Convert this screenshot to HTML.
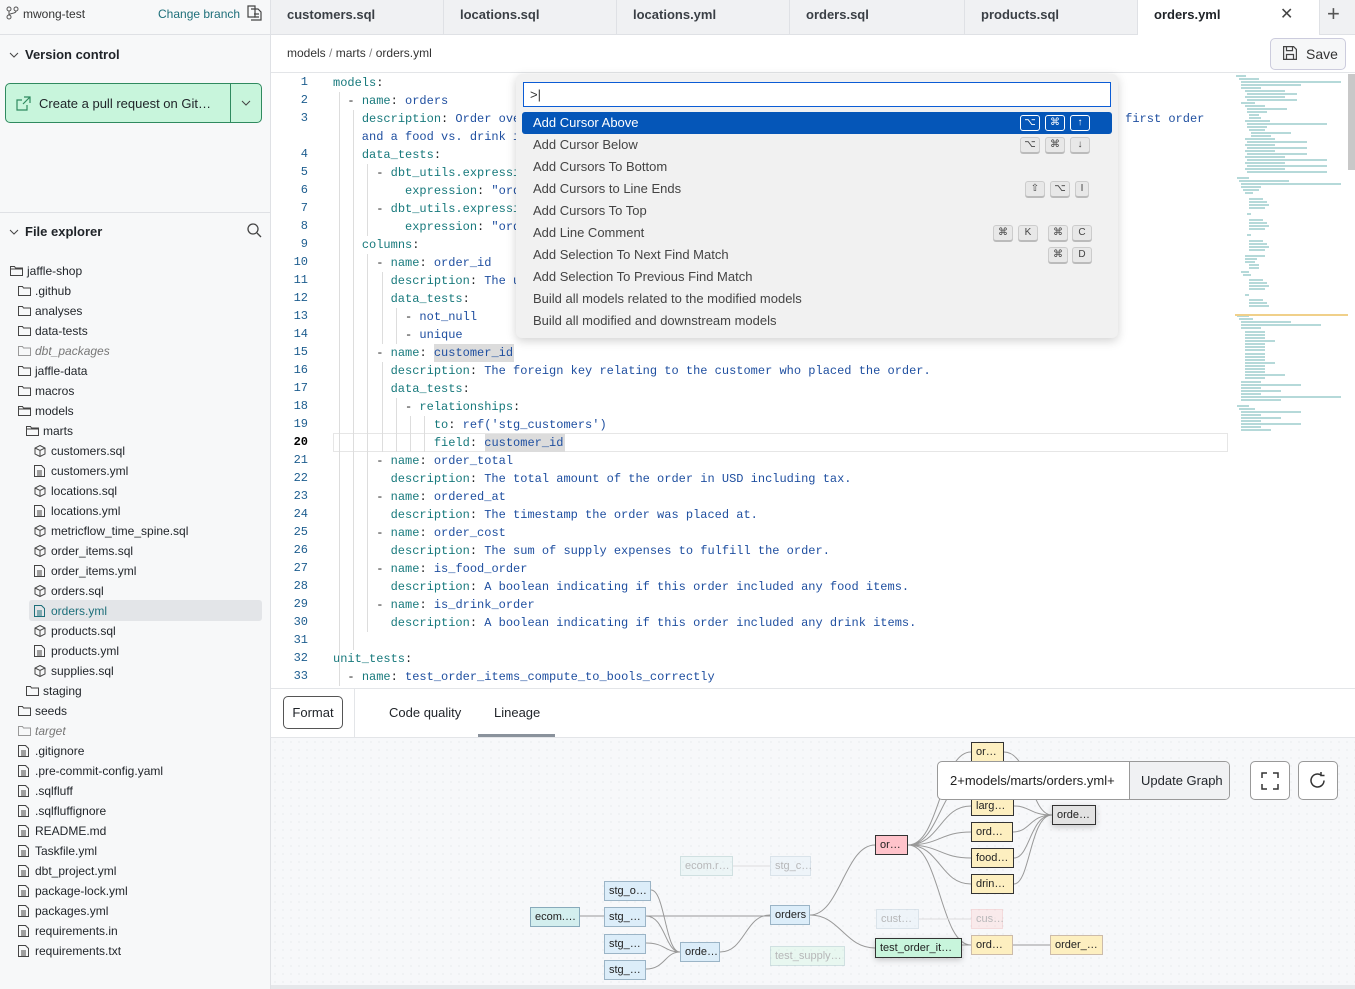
<!DOCTYPE html>
<html><head><meta charset="utf-8"><style>
*{box-sizing:border-box;margin:0;padding:0}
body{width:1355px;height:989px;overflow:hidden;font-family:"Liberation Sans",sans-serif;color:#1f2328;background:#fff;position:relative;font-size:13px}
.abs{position:absolute}
#side{left:0;top:0;width:271px;height:989px;background:#f7f8f9;border-right:1px solid #dfe1e5}
.tree div{position:absolute;height:20px;line-height:20px;font-size:12px;color:#1f2328;white-space:nowrap}
.tree svg{position:absolute;left:-17px;top:4px}
.tabs{left:271px;top:0;width:1084px;height:35px;background:#f0f1f3;border-bottom:1px solid #dfe1e5}
.tab{position:absolute;top:0;height:34px;border-right:1px solid #dfe1e5;font-weight:bold;font-size:13px;line-height:30px;padding-left:16px;color:#3a3f45}
.code{font-family:"Liberation Mono",monospace;font-size:12px}
.ln{position:absolute;left:272px;width:36px;text-align:right;color:#1d5d8f;font-family:"Liberation Mono",monospace;font-size:12px}
.cl{position:absolute;left:333px;white-space:pre;color:#1f4fa0;font-family:"Liberation Mono",monospace;font-size:12px;line-height:18px}
.k{color:#17797c}
.p{color:#222}
.pal{left:516px;top:74px;width:602px;height:264px;background:#f1f1f1;border-radius:6px;box-shadow:0 3px 10px rgba(0,0,0,.18)}
.it{position:absolute;left:6px;width:590px;height:22px;line-height:22px;padding-left:11px;font-size:13px;color:#444}
.kb{position:absolute;top:3px;height:16px;min-width:20px;border:1px solid #ccc;border-bottom-color:#bbb;border-radius:3px;background:#e8e8e8;font-size:10px;line-height:14px;text-align:center;color:#444;box-shadow:0 1px 0 #bbb}
.sel .kb{background:#0556b8;border-color:#fff;color:#fff;box-shadow:none}
.nd{position:absolute;height:20px;line-height:18px;font-size:11px;padding:0 4px;border:1px solid #7aa;white-space:nowrap;color:#222}
.bl{background:#dcedf9;border-color:#9bb4c6}
.yl{background:#fdefc0;border-color:#333}
.fd{opacity:.3}
</style></head><body>

<!-- sidebar -->
<div id="side" class="abs">
 <div class="abs" style="left:0;top:0;width:270px;height:35px;border-bottom:1px solid #dfe1e5"></div>
 <svg class="abs" style="left:6px;top:6px" width="13" height="14" viewBox="0 0 13 14" fill="none" stroke="#555" stroke-width="1"><circle cx="3" cy="3" r="2"/><circle cx="10" cy="3" r="2"/><circle cx="3" cy="11" r="2"/><path d="M3 5v4M10 5c0 3-7 2-7 4"/></svg>
 <div class="abs" style="left:23px;top:7px;font-size:12px;color:#333">mwong-test</div>
 <div class="abs" style="left:158px;top:7px;font-size:12px;color:#1e6f7a">Change branch</div>
 <svg class="abs" style="left:247px;top:5px" width="15" height="16" viewBox="0 0 15 16" fill="none" stroke="#444" stroke-width="1.2"><path d="M1 1h7v11H1zM4 4h7l3 3v8H4"/><path d="M7 9h5M7 12h5"/></svg>
 <svg class="abs" style="left:9px;top:51px" width="10" height="8" viewBox="0 0 10 8" fill="none" stroke="#444"><path d="M1 2l4 4 4-4"/></svg>
 <div class="abs" style="left:25px;top:47px;font-weight:bold;font-size:13px">Version control</div>
 <div class="abs" style="left:5px;top:83px;width:257px;height:40px;border:1px solid #2f8a5f;border-radius:5px;background:#c8f5dc"></div>
 <div class="abs" style="left:230px;top:84px;width:1px;height:38px;background:#2f8a5f"></div>
 <svg class="abs" style="left:16px;top:96px" width="15" height="15" viewBox="0 0 15 15" fill="none" stroke="#2f8a5f" stroke-width="1.2"><path d="M8 1h6v6M14 1L7 8M11 9v5H1V4h5"/></svg>
 <div class="abs" style="left:39px;top:96px;font-size:13px;color:#1f2328">Create a pull request on Git…</div>
 <svg class="abs" style="left:241px;top:100px" width="10" height="7" viewBox="0 0 10 7" fill="none" stroke="#444"><path d="M1 1l4 4 4-4"/></svg>
 <div class="abs" style="left:0;top:212px;width:270px;height:1px;background:#dfe1e5"></div>
 <svg class="abs" style="left:9px;top:228px" width="10" height="8" viewBox="0 0 10 8" fill="none" stroke="#444"><path d="M1 2l4 4 4-4"/></svg>
 <div class="abs" style="left:25px;top:224px;font-weight:bold;font-size:13px">File explorer</div>
 <svg class="abs" style="left:247px;top:223px" width="15" height="15" viewBox="0 0 15 15" fill="none" stroke="#444" stroke-width="1.3"><circle cx="6" cy="6" r="5"/><path d="M10 10l4 4"/></svg>
 <div class="abs" style="left:29px;top:600px;width:233px;height:21px;background:#e3e5e8;border-radius:3px"></div>
 <div class="tree">
 <!-- folders -->
 <div style="left:27px;top:261px"><svg width="13" height="11" viewBox="0 0 13 11" fill="none" stroke="#444"><path d="M.5 1.5h4l1 1.5h7v7.5H.5z M.5 4h12"/></svg>jaffle-shop</div>
 <div style="left:35px;top:281px"><svg width="13" height="11" viewBox="0 0 13 11" fill="none" stroke="#444"><path d="M.5 1.5h4l1 1.5h7v7.5H.5z"/></svg>.github</div>
 <div style="left:35px;top:301px"><svg width="13" height="11" viewBox="0 0 13 11" fill="none" stroke="#444"><path d="M.5 1.5h4l1 1.5h7v7.5H.5z"/></svg>analyses</div>
 <div style="left:35px;top:321px"><svg width="13" height="11" viewBox="0 0 13 11" fill="none" stroke="#444"><path d="M.5 1.5h4l1 1.5h7v7.5H.5z"/></svg>data-tests</div>
 <div style="left:35px;top:341px;color:#777;font-style:italic"><svg width="13" height="11" viewBox="0 0 13 11" fill="none" stroke="#999"><path d="M.5 1.5h4l1 1.5h7v7.5H.5z"/></svg>dbt_packages</div>
 <div style="left:35px;top:361px"><svg width="13" height="11" viewBox="0 0 13 11" fill="none" stroke="#444"><path d="M.5 1.5h4l1 1.5h7v7.5H.5z"/></svg>jaffle-data</div>
 <div style="left:35px;top:381px"><svg width="13" height="11" viewBox="0 0 13 11" fill="none" stroke="#444"><path d="M.5 1.5h4l1 1.5h7v7.5H.5z"/></svg>macros</div>
 <div style="left:35px;top:401px"><svg width="13" height="11" viewBox="0 0 13 11" fill="none" stroke="#444"><path d="M.5 1.5h4l1 1.5h7v7.5H.5z M.5 4h12"/></svg>models</div>
 <div style="left:43px;top:421px"><svg width="13" height="11" viewBox="0 0 13 11" fill="none" stroke="#444"><path d="M.5 1.5h4l1 1.5h7v7.5H.5z M.5 4h12"/></svg>marts</div>
 <div style="left:51px;top:441px"><svg width="12" height="12" viewBox="0 0 12 12" fill="none" stroke="#444"><path d="M6 .5l5 2.5v6L6 11.5 1 9V3zM1 3l5 2.5L11 3M6 5.5v6"/></svg>customers.sql</div>
 <div style="left:51px;top:461px"><svg width="11" height="12" viewBox="0 0 11 12" fill="none" stroke="#444"><path d="M.5.5h7l3 3v8H.5zM3 6h5M3 8h5M3 10h5"/></svg>customers.yml</div>
 <div style="left:51px;top:481px"><svg width="12" height="12" viewBox="0 0 12 12" fill="none" stroke="#444"><path d="M6 .5l5 2.5v6L6 11.5 1 9V3zM1 3l5 2.5L11 3M6 5.5v6"/></svg>locations.sql</div>
 <div style="left:51px;top:501px"><svg width="11" height="12" viewBox="0 0 11 12" fill="none" stroke="#444"><path d="M.5.5h7l3 3v8H.5zM3 6h5M3 8h5M3 10h5"/></svg>locations.yml</div>
 <div style="left:51px;top:521px"><svg width="12" height="12" viewBox="0 0 12 12" fill="none" stroke="#444"><path d="M6 .5l5 2.5v6L6 11.5 1 9V3zM1 3l5 2.5L11 3M6 5.5v6"/></svg>metricflow_time_spine.sql</div>
 <div style="left:51px;top:541px"><svg width="12" height="12" viewBox="0 0 12 12" fill="none" stroke="#444"><path d="M6 .5l5 2.5v6L6 11.5 1 9V3zM1 3l5 2.5L11 3M6 5.5v6"/></svg>order_items.sql</div>
 <div style="left:51px;top:561px"><svg width="11" height="12" viewBox="0 0 11 12" fill="none" stroke="#444"><path d="M.5.5h7l3 3v8H.5zM3 6h5M3 8h5M3 10h5"/></svg>order_items.yml</div>
 <div style="left:51px;top:581px"><svg width="12" height="12" viewBox="0 0 12 12" fill="none" stroke="#444"><path d="M6 .5l5 2.5v6L6 11.5 1 9V3zM1 3l5 2.5L11 3M6 5.5v6"/></svg>orders.sql</div>
 <div style="left:51px;top:601px;color:#1e6f7a"><svg width="11" height="12" viewBox="0 0 11 12" fill="none" stroke="#1e6f7a"><path d="M.5.5h7l3 3v8H.5zM3 6h5M3 8h5M3 10h5"/></svg>orders.yml</div>
 <div style="left:51px;top:621px"><svg width="12" height="12" viewBox="0 0 12 12" fill="none" stroke="#444"><path d="M6 .5l5 2.5v6L6 11.5 1 9V3zM1 3l5 2.5L11 3M6 5.5v6"/></svg>products.sql</div>
 <div style="left:51px;top:641px"><svg width="11" height="12" viewBox="0 0 11 12" fill="none" stroke="#444"><path d="M.5.5h7l3 3v8H.5zM3 6h5M3 8h5M3 10h5"/></svg>products.yml</div>
 <div style="left:51px;top:661px"><svg width="12" height="12" viewBox="0 0 12 12" fill="none" stroke="#444"><path d="M6 .5l5 2.5v6L6 11.5 1 9V3zM1 3l5 2.5L11 3M6 5.5v6"/></svg>supplies.sql</div>
 <div style="left:43px;top:681px"><svg width="13" height="11" viewBox="0 0 13 11" fill="none" stroke="#444"><path d="M.5 1.5h4l1 1.5h7v7.5H.5z"/></svg>staging</div>
 <div style="left:35px;top:701px"><svg width="13" height="11" viewBox="0 0 13 11" fill="none" stroke="#444"><path d="M.5 1.5h4l1 1.5h7v7.5H.5z"/></svg>seeds</div>
 <div style="left:35px;top:721px;color:#777;font-style:italic"><svg width="13" height="11" viewBox="0 0 13 11" fill="none" stroke="#999"><path d="M.5 1.5h4l1 1.5h7v7.5H.5z"/></svg>target</div>
 <div style="left:35px;top:741px"><svg width="11" height="12" viewBox="0 0 11 12" fill="none" stroke="#444"><path d="M.5.5h7l3 3v8H.5zM3 6h5M3 8h5M3 10h5"/></svg>.gitignore</div>
 <div style="left:35px;top:761px"><svg width="11" height="12" viewBox="0 0 11 12" fill="none" stroke="#444"><path d="M.5.5h7l3 3v8H.5zM3 6h5M3 8h5M3 10h5"/></svg>.pre-commit-config.yaml</div>
 <div style="left:35px;top:781px"><svg width="11" height="12" viewBox="0 0 11 12" fill="none" stroke="#444"><path d="M.5.5h7l3 3v8H.5zM3 6h5M3 8h5M3 10h5"/></svg>.sqlfluff</div>
 <div style="left:35px;top:801px"><svg width="11" height="12" viewBox="0 0 11 12" fill="none" stroke="#444"><path d="M.5.5h7l3 3v8H.5zM3 6h5M3 8h5M3 10h5"/></svg>.sqlfluffignore</div>
 <div style="left:35px;top:821px"><svg width="11" height="12" viewBox="0 0 11 12" fill="none" stroke="#444"><path d="M.5.5h7l3 3v8H.5zM3 6h5M3 8h5M3 10h5"/></svg>README.md</div>
 <div style="left:35px;top:841px"><svg width="11" height="12" viewBox="0 0 11 12" fill="none" stroke="#444"><path d="M.5.5h7l3 3v8H.5zM3 6h5M3 8h5M3 10h5"/></svg>Taskfile.yml</div>
 <div style="left:35px;top:861px"><svg width="11" height="12" viewBox="0 0 11 12" fill="none" stroke="#444"><path d="M.5.5h7l3 3v8H.5zM3 6h5M3 8h5M3 10h5"/></svg>dbt_project.yml</div>
 <div style="left:35px;top:881px"><svg width="11" height="12" viewBox="0 0 11 12" fill="none" stroke="#444"><path d="M.5.5h7l3 3v8H.5zM3 6h5M3 8h5M3 10h5"/></svg>package-lock.yml</div>
 <div style="left:35px;top:901px"><svg width="11" height="12" viewBox="0 0 11 12" fill="none" stroke="#444"><path d="M.5.5h7l3 3v8H.5zM3 6h5M3 8h5M3 10h5"/></svg>packages.yml</div>
 <div style="left:35px;top:921px"><svg width="11" height="12" viewBox="0 0 11 12" fill="none" stroke="#444"><path d="M.5.5h7l3 3v8H.5zM3 6h5M3 8h5M3 10h5"/></svg>requirements.in</div>
 <div style="left:35px;top:941px"><svg width="11" height="12" viewBox="0 0 11 12" fill="none" stroke="#444"><path d="M.5.5h7l3 3v8H.5zM3 6h5M3 8h5M3 10h5"/></svg>requirements.txt</div>
 </div>
</div>

<!-- tabs -->
<div class="tabs abs">
 <div class="tab" style="left:0;width:173px">customers.sql</div>
 <div class="tab" style="left:173px;width:173px">locations.sql</div>
 <div class="tab" style="left:346px;width:173px">locations.yml</div>
 <div class="tab" style="left:519px;width:175px">orders.sql</div>
 <div class="tab" style="left:694px;width:173px">products.sql</div>
 <div class="tab" style="left:867px;width:182px;background:#fff;height:35px;color:#1f2328">orders.yml<span style="position:absolute;left:142px;top:0;font-weight:normal;font-size:16px;color:#444">✕</span></div>
 <div class="abs" style="left:1056px;top:1px;font-size:22px;color:#555;line-height:26px">+</div>
</div>
<div class="abs" style="left:287px;top:46px;font-size:12px;color:#333">models <span style="color:#888">/</span> marts <span style="color:#888">/</span> orders.yml</div>
<div class="abs" style="left:1270px;top:38px;width:76px;height:32px;border:1px solid #ccd;border-radius:5px;background:#f6f7f8"></div>
<svg class="abs" style="left:1283px;top:46px" width="14" height="14" viewBox="0 0 14 14" fill="none" stroke="#444" stroke-width="1.2"><path d="M.6.6h10l2.8 2.8v10H.6zM3.5.6v4h6v-4M3.5 13.4V8.5h7v4.9"/></svg>
<div class="abs" style="left:1306px;top:46px;font-size:14px;color:#333">Save</div>
<div class="abs" style="left:271px;top:72px;width:1084px;height:1px;background:#e3e5e8"></div>

<!-- editor -->
<div class="abs" style="left:333px;top:433px;width:895px;height:19px;border:1px solid #e6e6e6"></div>
<div class="abs" style="left:434px;top:344px;width:80px;height:18px;background:#dcdcdc"></div>
<div class="abs" style="left:485px;top:434px;width:80px;height:18px;background:#dcdcdc"></div>
<div id="code"></div>
<!-- guides -->
<div class="abs" style="left:339px;top:92px;width:1px;height:594px;background:#ddd"></div>
<div class="abs" style="left:353px;top:110px;width:1px;height:540px;background:#ddd"></div>
<div class="abs" style="left:367px;top:164px;width:1px;height:72px;background:#ddd"></div>
<div class="abs" style="left:367px;top:254px;width:1px;height:378px;background:#ddd"></div>
<div class="abs" style="left:382px;top:272px;width:1px;height:72px;background:#ddd"></div>
<div class="abs" style="left:382px;top:362px;width:1px;height:90px;background:#ddd"></div>
<div class="abs" style="left:396px;top:308px;width:1px;height:36px;background:#ddd"></div>
<div class="abs" style="left:396px;top:398px;width:1px;height:54px;background:#ddd"></div>
<div class="abs" style="left:410px;top:416px;width:1px;height:36px;background:#ddd"></div>
<div class="abs" style="left:424px;top:416px;width:1px;height:36px;background:#ddd"></div>

<!-- minimap -->
<svg class="abs" style="left:1235px;top:74px" width="113" height="370">
 <g stroke="#3a9a9a" stroke-width="1" opacity=".75">
 <path d="M1 2h10M4 5h20M6 8h100M6 11h60M6 14h20M10 17h40M12 20h50M10 23h40M12 26h50M6 29h14M10 32h20M12 35h40M12 38h20M14 41h10M14 44h12M10 47h25M12 50h80M12 53h20M14 56h16M16 59h40M16 62h20M10 65h30M12 68h60M10 71h30M12 74h60M10 77h30M12 80h60M10 83h40M12 86h80M10 89h40M12 92h80M10 95h40M12 98h80"/>
 <path d="M2 104h12M4 107h50M6 110h100M6 113h20M8 116h16M10 119h8M14 125h14M14 128h18M14 131h20M14 134h16M12 140h4M14 146h14M14 149h18M14 152h20M14 155h16M12 161h4M14 167h14M14 170h18M14 173h20M14 176h16M10 182h20M10 185h12M10 188h10M14 191h10M14 194h10M6 198h8M8 201h8M14 206h14M14 209h18M14 212h20M14 215h16M10 221h4M14 226h14M14 229h18M14 232h20"/>
 <path d="M2 242h12M4 245h14M6 248h50M6 251h80M6 254h20M10 258h20M10 261h20M10 264h20M10 267h30M10 270h20M10 273h20M10 276h20M10 280h20M10 283h20M10 286h20M10 289h30M10 292h20M10 295h20M10 298h20M10 301h40M10 304h20M6 308h20M6 311h60M6 314h20M6 317h40M6 320h20M6 323h100M6 326h40M2 332h12M4 335h16M6 338h60M6 341h20M6 344h40M6 347h20M6 350h60M6 353h20M6 356h30"/>
 </g>
 <rect x="0" y="240" width="113" height="2" fill="#f0d08a"/>
</svg>
<div class="abs" style="left:1348px;top:74px;width:7px;height:96px;background:#c8c8c8"></div>

<!-- command palette -->
<div class="pal abs">
 <div class="abs" style="left:7px;top:8px;width:588px;height:25px;background:#fff;border:1px solid #0b5cd5"></div>
 <div class="abs" style="left:14px;top:13px;font-size:13px;color:#333">&gt;|</div>
 <div class="it sel" style="top:38px;background:#0556b8;color:#fff;border-radius:3px">Add Cursor Above
  <span class="kb" style="left:498px">⌥</span><span class="kb" style="left:523px">⌘</span><span class="kb" style="left:548px">↑</span></div>
 <div class="it" style="top:60px">Add Cursor Below
  <span class="kb" style="left:498px">⌥</span><span class="kb" style="left:523px">⌘</span><span class="kb" style="left:548px">↓</span></div>
 <div class="it" style="top:82px">Add Cursors To Bottom</div>
 <div class="it" style="top:104px">Add Cursors to Line Ends
  <span class="kb" style="left:503px">⇧</span><span class="kb" style="left:528px">⌥</span><span class="kb" style="left:553px;min-width:14px">I</span></div>
 <div class="it" style="top:126px">Add Cursors To Top</div>
 <div class="it" style="top:148px">Add Line Comment
  <span class="kb" style="left:471px">⌘</span><span class="kb" style="left:496px">K</span><span class="kb" style="left:526px">⌘</span><span class="kb" style="left:550px">C</span></div>
 <div class="it" style="top:170px">Add Selection To Next Find Match
  <span class="kb" style="left:526px">⌘</span><span class="kb" style="left:550px">D</span></div>
 <div class="it" style="top:192px">Add Selection To Previous Find Match</div>
 <div class="it" style="top:214px">Build all models related to the modified models</div>
 <div class="it" style="top:236px">Build all modified and downstream models</div>
</div>

<!-- bottom panel -->
<div class="abs" style="left:271px;top:688px;width:1084px;height:1px;background:#e3e5e8"></div>
<div class="abs" style="left:283px;top:696px;width:60px;height:33px;border:1px solid #555;border-radius:5px;font-size:13px;line-height:31px;text-align:center">Format</div>
<div class="abs" style="left:354px;top:689px;width:1px;height:48px;background:#e3e5e8"></div>
<div class="abs" style="left:389px;top:705px;font-size:13px">Code quality</div>
<div class="abs" style="left:494px;top:705px;font-size:13px">Lineage</div>
<div class="abs" style="left:478px;top:734px;width:77px;height:3px;background:#8a929c"></div>
<div class="abs" style="left:271px;top:737px;width:1084px;height:249px;background-color:#f7f8fa;background-image:radial-gradient(#dfe2e6 0.7px,transparent 0.8px);background-size:8px 8px;border-top:1px solid #e3e5e8"></div>
<div class="abs" style="left:271px;top:985px;width:1084px;height:4px;background:#e6e8eb"></div>

<svg class="abs" style="left:271px;top:737px" width="1084" height="248" fill="none" stroke="#999" stroke-width="1">
 <g transform="translate(-271,-737)">
 <path d="M580 916H604M646 916H770M651 890C665 890 665 952 680 952M646 916C665 916 665 952 680 952M646 943C665 943 665 952 680 952M646 969C665 969 665 952 680 952M720 952C745 952 745 915 770 915M810 915C840 915 845 845 875 845M810 915C840 915 845 948 875 948M962 945H971M1013 945H1050"/>
 <path d="M908 845C940 845 940 752 971 752M908 845C940 845 940 780 971 780M908 845C940 845 940 806 971 806M908 845C940 845 940 832 971 832M908 845C940 845 940 858 971 858M908 845C940 845 940 884 971 884M908 845C940 845 940 945 971 945M1004 752C1030 752 1030 815 1052 815M1014 806C1030 806 1030 815 1052 815M1013 832C1030 832 1030 815 1052 815M1014 858C1030 858 1030 815 1052 815M1014 884C1030 884 1030 815 1052 815"/>
 <path d="M733 866H770M919 919H971" stroke="#ddd"/>
 </g>
</svg>
<div class="nd fd" style="left:680px;top:856px;width:53px;background:#d5efef">ecom.r…</div>
<div class="nd fd bl" style="left:770px;top:856px;width:41px">stg_c…</div>
<div class="nd fd bl" style="left:876px;top:909px;width:43px">cust…</div>
<div class="nd fd" style="left:971px;top:909px;width:32px;background:#fcc;border-color:#e99">cus…</div>
<div class="nd fd" style="left:770px;top:946px;width:75px;background:#c8f5dc">test_supply…</div>
<div class="nd" style="left:530px;top:907px;width:50px;background:#d3eeee;border-color:#8ab">ecom.…</div>
<div class="nd bl" style="left:604px;top:881px;width:47px">stg_o…</div>
<div class="nd bl" style="left:604px;top:907px;width:42px">stg_…</div>
<div class="nd bl" style="left:604px;top:934px;width:42px">stg_…</div>
<div class="nd bl" style="left:604px;top:960px;width:42px">stg_…</div>
<div class="nd bl" style="left:680px;top:942px;width:40px">orde…</div>
<div class="nd bl" style="left:770px;top:905px;width:40px">orders</div>
<div class="nd" style="left:875px;top:835px;width:33px;background:#ffc3cb;border-color:#333">or…</div>
<div class="nd" style="left:875px;top:938px;width:87px;background:#c8f5dc;border-color:#333;box-shadow:0 2px 6px rgba(0,0,0,.2)">test_order_it…</div>
<div class="nd yl" style="left:971px;top:742px;width:33px">or…</div>
<div class="nd yl" style="left:971px;top:796px;width:43px">larg…</div>
<div class="nd yl" style="left:971px;top:822px;width:42px">ord…</div>
<div class="nd yl" style="left:971px;top:848px;width:43px">food…</div>
<div class="nd yl" style="left:971px;top:874px;width:43px">drin…</div>
<div class="nd yl" style="left:971px;top:935px;width:42px;border-color:#cba">ord…</div>
<div class="nd yl" style="left:1050px;top:935px;width:53px;border-color:#cba">order_…</div>
<div class="nd" style="left:1052px;top:805px;width:44px;background:#e2e2e2;border-color:#333;box-shadow:0 2px 6px rgba(0,0,0,.2)">orde…</div>

<div class="abs" style="left:937px;top:761px;width:293px;height:39px;background:#fff;border:1px solid #999;border-radius:5px;overflow:hidden">
 <div class="abs" style="left:12px;top:11px;font-size:13px;color:#222;white-space:nowrap">2+models/marts/orders.yml+</div>
 <div class="abs" style="left:191px;top:0;width:102px;height:39px;background:#f0f1f3;border-left:1px solid #999;font-size:13px;line-height:37px;padding-left:11px">Update Graph</div>
</div>
<div class="abs" style="left:1250px;top:761px;width:40px;height:39px;background:#fff;border:1px solid #999;border-radius:5px"></div>
<svg class="abs" style="left:1261px;top:772px" width="18" height="18" viewBox="0 0 18 18" fill="none" stroke="#333" stroke-width="1.5"><path d="M1 6V1h5M12 1h5v5M17 12v5h-5M6 17H1v-5"/></svg>
<div class="abs" style="left:1298px;top:761px;width:40px;height:39px;background:#fff;border:1px solid #999;border-radius:5px"></div>
<svg class="abs" style="left:1309px;top:772px" width="18" height="18" viewBox="0 0 18 18" fill="none" stroke="#333" stroke-width="1.5"><path d="M15 8.5A6.5 6.5 0 1 1 12 3M12 0v3.5h3.5"/></svg>

<script>
var L=[
[1,'<span class="k">models</span><span class="p">:</span>'],
[2,'  <span class="p">-</span> <span class="k">name</span><span class="p">:</span> orders'],
[3,'    <span class="k">description</span><span class="p">:</span> Order overview data mart, offering key details for each order including if it\'s a customer\'s first order'],
['','    and a food vs. drink item breakdown. One row per order.'],
[4,'    <span class="k">data_tests</span><span class="p">:</span>'],
[5,'      <span class="p">-</span> <span class="k">dbt_utils.expression_is_true</span><span class="p">:</span>'],
[6,'          <span class="k">expression</span><span class="p">:</span> "order_items_subtotal = subtotal"'],
[7,'      <span class="p">-</span> <span class="k">dbt_utils.expression_is_true</span><span class="p">:</span>'],
[8,'          <span class="k">expression</span><span class="p">:</span> "order_total = subtotal + tax_paid"'],
[9,'    <span class="k">columns</span><span class="p">:</span>'],
[10,'      <span class="p">-</span> <span class="k">name</span><span class="p">:</span> order_id'],
[11,'        <span class="k">description</span><span class="p">:</span> The unique key of the orders mart.'],
[12,'        <span class="k">data_tests</span><span class="p">:</span>'],
[13,'          <span class="p">-</span> not_null'],
[14,'          <span class="p">-</span> unique'],
[15,'      <span class="p">-</span> <span class="k">name</span><span class="p">:</span> customer_id'],
[16,'        <span class="k">description</span><span class="p">:</span> The foreign key relating to the customer who placed the order.'],
[17,'        <span class="k">data_tests</span><span class="p">:</span>'],
[18,'          <span class="p">-</span> <span class="k">relationships</span><span class="p">:</span>'],
[19,'              <span class="k">to</span><span class="p">:</span> ref(\'stg_customers\')'],
[20,'              <span class="k">field</span><span class="p">:</span> customer_id'],
[21,'      <span class="p">-</span> <span class="k">name</span><span class="p">:</span> order_total'],
[22,'        <span class="k">description</span><span class="p">:</span> The total amount of the order in USD including tax.'],
[23,'      <span class="p">-</span> <span class="k">name</span><span class="p">:</span> ordered_at'],
[24,'        <span class="k">description</span><span class="p">:</span> The timestamp the order was placed at.'],
[25,'      <span class="p">-</span> <span class="k">name</span><span class="p">:</span> order_cost'],
[26,'        <span class="k">description</span><span class="p">:</span> The sum of supply expenses to fulfill the order.'],
[27,'      <span class="p">-</span> <span class="k">name</span><span class="p">:</span> is_food_order'],
[28,'        <span class="k">description</span><span class="p">:</span> A boolean indicating if this order included any food items.'],
[29,'      <span class="p">-</span> <span class="k">name</span><span class="p">:</span> is_drink_order'],
[30,'        <span class="k">description</span><span class="p">:</span> A boolean indicating if this order included any drink items.'],
[31,''],
[32,'<span class="k">unit_tests</span><span class="p">:</span>'],
[33,'  <span class="p">-</span> <span class="k">name</span><span class="p">:</span> test_order_items_compute_to_bools_correctly']];
var h='';L.forEach(function(r,i){var y=74+i*18;h+='<div class="ln" style="top:'+(y+1)+'px;'+(r[0]==20?'color:#000;font-weight:bold':'')+'">'+r[0]+'</div><div class="cl" style="top:'+y+'px">'+r[1]+'</div>';});
document.getElementById('code').innerHTML=h;
</script>
</body></html>
